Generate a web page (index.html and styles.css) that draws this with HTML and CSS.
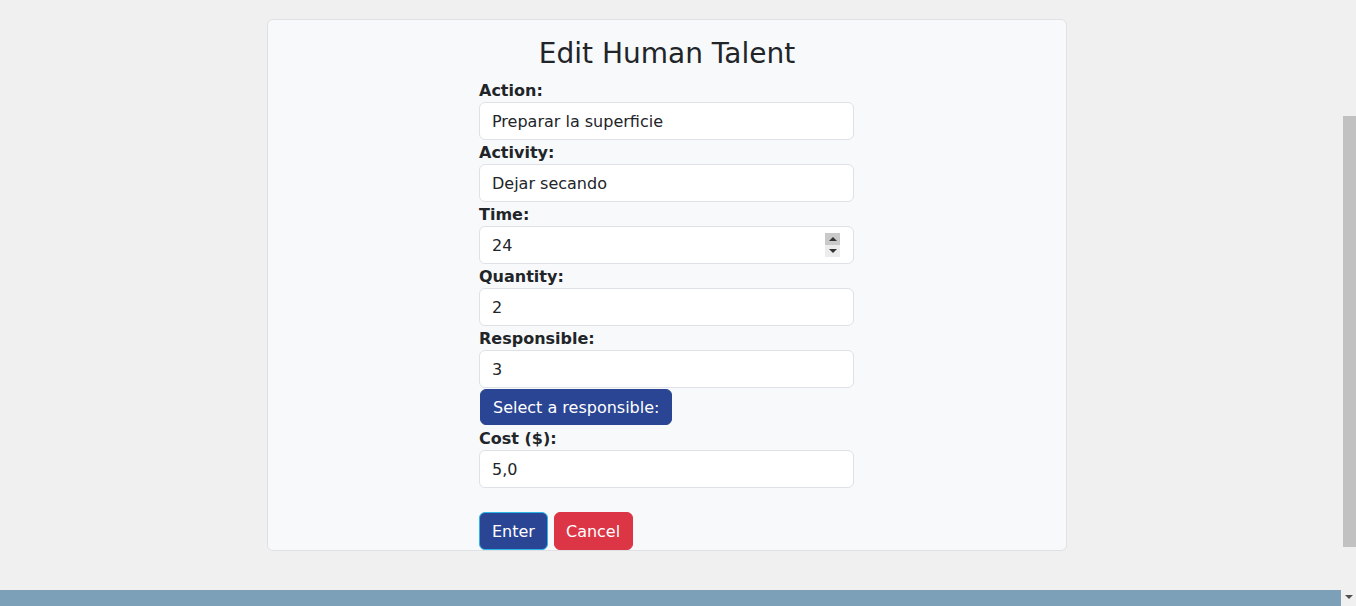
FILE: index.html
```html
<!DOCTYPE html>
<html lang="en">
<head>
<meta charset="utf-8">
<title>Edit Human Talent</title>
<link rel="stylesheet" href="styles.css">
</head>
<body>
<div class="screen">
  <div class="page">
    <div class="content">
      <div class="card">
        <h3 class="title">Edit Human Talent</h3>
        <form class="form">
          <label class="lbl">Action:</label>
          <input class="field" type="text" value="Preparar la superficie">
          <label class="lbl">Activity:</label>
          <input class="field" type="text" value="Dejar secando">
          <label class="lbl">Time:</label>
          <div class="num-wrap">
            <input class="field" type="text" value="24">
            <span class="spinner">
              <span class="spin spin-up"><span class="tri tri-up"></span></span>
              <span class="spin spin-down"><span class="tri tri-down"></span></span>
            </span>
          </div>
          <label class="lbl">Quantity:</label>
          <input class="field" type="text" value="2">
          <label class="lbl">Responsible:</label>
          <input class="field" type="text" value="3">
          <div class="select-row"><span class="btn btn-primary btn-select">Select a responsible:</span></div>
          <label class="lbl">Cost ($):</label>
          <input class="field" type="text" value="5,0">
          <div class="actions">
            <button type="button" class="btn btn-primary btn-enter">Enter</button>
            <button type="button" class="btn btn-danger">Cancel</button>
          </div>
        </form>
      </div>
    </div>
    <div class="footer"></div>
  </div>
  <div class="scrollbar">
    <div class="track"><div class="thumb"></div></div>
    <div class="arrow-down"><span class="sb-tri"></span></div>
  </div>
</div>
</body>
</html>
```

FILE: styles.css
```css
* { box-sizing: border-box; }
html, body { margin: 0; padding: 0; }
body {
  font-family: "DejaVu Sans", "Noto Sans", sans-serif;
  font-size: 16px;
  line-height: 1.5;
  color: #212529;
  background: #f0f0f0;
  overflow: hidden;
}
.screen {
  display: flex;
  width: 1356px;
  height: 606px;
}
.page {
  width: 1341px;
  display: flex;
  flex-direction: column;
}
.content {
  flex: 1;
  padding: 19px 0 0 267px;
}
.card {
  width: 800px;
  height: 532px;
  background: #f8f9fa;
  border: 1px solid #dfe1e5;
  border-radius: 6px;
  padding: 16px 16px 0;
}
.title {
  margin: 0 0 8px;
  padding-top: 1px;
  height: 34px;
  font-size: 28px;
  font-weight: 400;
  line-height: 33px;
  text-align: center;
}
.form {
  width: 375px;
  margin: 0 0 0 195px;
  display: flex;
  flex-direction: column;
}
.lbl {
  display: block;
  font-weight: 700;
  line-height: 23px;
  padding-top: 1px;
}
.field {
  display: block;
  width: 100%;
  height: 38px;
  padding: 6px 12px;
  font-family: inherit;
  font-size: 16px;
  line-height: 24px;
  color: #212529;
  background: #fff;
  border: 1px solid #dee2e6;
  border-radius: 6px;
  outline: none;
}
.num-wrap {
  position: relative;
}
.spinner {
  position: absolute;
  left: 346px;
  top: 7px;
  width: 15px;
  height: 24px;
  display: flex;
  flex-direction: column;
}
.spin {
  flex: 1;
  display: flex;
  align-items: center;
  justify-content: center;
}
.spin-up { background: #c9c9c9; }
.spin-down { background: #ececec; }
.tri {
  width: 0;
  height: 0;
  border-left: 4px solid transparent;
  border-right: 4px solid transparent;
}
.tri-up { border-bottom: 4px solid #333; }
.tri-down { border-top: 4px solid #333; }
.select-row {
  padding: 1px 0 0 1px;
  height: 38px;
}
.btn {
  display: inline-block;
  font-family: inherit;
  font-size: 16px;
  line-height: 24px;
  padding: 7px 12px 5px;
  border: 1px solid transparent;
  border-radius: 6px;
  color: #fff;
  cursor: pointer;
}
.btn-primary {
  background: #2a4594;
  border-color: #2a4594;
}
.btn-select {
  padding: 6px 12px 4px 12px;
}
.btn-enter {
  border-color: #2cb5e8;
}
.btn-danger {
  background: #dc3545;
  border-color: #dc3545;
  padding-left: 11px;
  padding-right: 12px;
}
.actions {
  margin-top: 24px;
  display: flex;
  gap: 6px;
}
.footer {
  height: 16px;
  background: #7ba0b8;
}
.scrollbar {
  width: 15px;
  height: 606px;
  background: #f0f0f0;
  display: flex;
  flex-direction: column;
}
.track {
  flex: 1;
  padding-top: 116px;
}
.thumb {
  margin-left: 2px;
  width: 13px;
  height: 431px;
  background: #c1c1c1;
}
.arrow-down {
  height: 17px;
  display: flex;
  justify-content: center;
  padding: 6px 0 0 1px;
}
.sb-tri {
  width: 0;
  height: 0;
  border-left: 4px solid transparent;
  border-right: 4px solid transparent;
  border-top: 4px solid #505050;
}
```
